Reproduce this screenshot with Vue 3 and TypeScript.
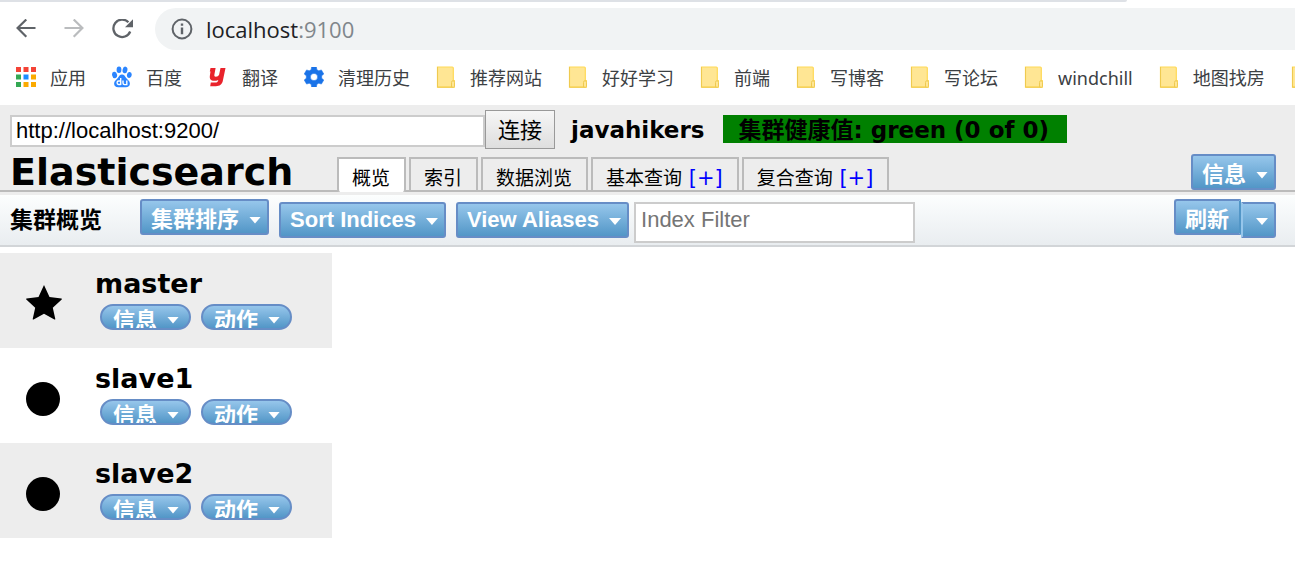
<script setup lang="ts">
import { ref } from 'vue'

interface Bookmark {
  label: string
  icon: 'apps' | 'paw' | 'dict' | 'gear' | 'folder'
}
interface Tab {
  label: string
  add?: boolean
}
interface ClusterNode {
  name: string
  master: boolean
}

const bookmarks: Bookmark[] = [
  { label: '应用', icon: 'apps' },
  { label: '百度', icon: 'paw' },
  { label: '翻译', icon: 'dict' },
  { label: '清理历史', icon: 'gear' },
  { label: '推荐网站', icon: 'folder' },
  { label: '好好学习', icon: 'folder' },
  { label: '前端', icon: 'folder' },
  { label: '写博客', icon: 'folder' },
  { label: '写论坛', icon: 'folder' },
  { label: 'windchill', icon: 'folder' },
  { label: '地图找房', icon: 'folder' },
  { label: '', icon: 'folder' },
]
const tabs: Tab[] = [
  { label: '概览' },
  { label: '索引' },
  { label: '数据浏览' },
  { label: '基本查询', add: true },
  { label: '复合查询', add: true },
]
const nodes: ClusterNode[] = [
  { name: 'master', master: true },
  { name: 'slave1', master: false },
  { name: 'slave2', master: false },
]
const appColors = ['#f44336', '#f44336', '#f44336', '#34a853', '#1a8cff', '#fbaa00', '#34a853', '#fbaa00', '#fbaa00']
const endpoint = ref('http://localhost:9200/')
const filter = ref('')
const active = ref(0)
</script>

<template>
  <div class="window">
    <div class="tabstrip"></div>
    <nav class="navbar">
      <button class="nav-btn" aria-label="Back">
        <svg width="20" height="20" viewBox="0 0 20 20" fill="none" stroke="#5f6368" stroke-width="2.2"><path d="M19.5 9H2M10.3 .5 1.600 9l8.700 8.700" /></svg>
      </button>
      <button class="nav-btn" aria-label="Forward">
        <svg width="20" height="20" viewBox="0 0 20 20" fill="none" stroke="#babcbe" stroke-width="2.2"><path d="M.5 9H18M9.7 .5 18.400 9l-8.700 8.700" /></svg>
      </button>
      <button class="nav-btn" aria-label="Reload">
        <svg width="22" height="20" viewBox="0 0 22 20"><path d="M18.200 12.500A8.700 8.700 0 1 1 16.400 3.300" fill="none" stroke="#5f6368" stroke-width="2.300" /><path d="M21 .2v8h-8z" fill="#5f6368" /></svg>
      </button>
      <div class="omnibox">
        <svg width="22" height="22" viewBox="0 0 22 22"><circle cx="11" cy="11" r="9.400" fill="none" stroke="#5f6368" stroke-width="2" /><path d="M9.800 5.500h2.400v2.200H9.800zM9.800 9.600h2.400v6.600H9.800z" fill="#5f6368" /></svg>
        <span class="url">localhost<span class="port">:9100</span></span>
      </div>
    </nav>
    <nav class="bookmarks">
      <a v-for="(b, i) in bookmarks" :key="i" href="#" class="bookmark">
        <svg v-if="b.icon === 'apps'" width="20" height="20" viewBox="0 0 20 20">
          <rect v-for="(c, n) in appColors" :key="n" :x="(n % 3) * 7.5" :y="Math.floor(n / 3) * 7.5" width="5" height="5" :fill="c" />
        </svg>
        <svg v-else-if="b.icon === 'paw'" width="20" height="22" viewBox="0 0 20 22" fill="#2b85ff">
          <ellipse cx="2.6" cy="9" rx="2.5" ry="3.2" transform="rotate(-12 2.6 9)" />
          <ellipse cx="7" cy="3.7" rx="2.4" ry="3.3" />
          <ellipse cx="13" cy="3.9" rx="2.4" ry="3.3" transform="rotate(12 13 3.9)" />
          <ellipse cx="17.3" cy="9" rx="2.4" ry="3" transform="rotate(8 17.3 9)" />
          <path d="M10 8.6c2.2 0 3 1.8 4.2 3.3 1.3 1.6 3.7 3 3.7 5.6 0 2.5-1.7 3.8-4 3.8H6.100c-2.300 0-4-1.300-4-3.800 0-2.600 2.400-4 3.700-5.600C7 10.400 7.800 8.600 10 8.600z" />
          <path d="M8.700 12v7M8.700 15H6.600c-2 0-2 3.500 0 3.500h2.100M11 14.500v2.600c0 1 .6 1.500 1.500 1.500h2.300v-4.100" fill="none" stroke="#fff" stroke-width="1.400" />
        </svg>
        <svg v-else-if="b.icon === 'dict'" width="20" height="20" viewBox="0 0 20 20">
          <path d="M2.500 1H7.600L6.400 7.500c-.3 1.500.2 2.200 1.400 2.200 1.500 0 2.700-.8 3.300-2L12.500 1h5l-2.600 12.600c-.8 4-3.200 5.600-7 5.600H2.200l.6-3.800h4.500c1.700 0 2.600-.6 3-2.500-1.300.6-2.700.8-4.200.8-3.300 0-4.800-1.900-4.200-5.300L2.500 4.600H1.800z" fill="#e9232c" />
        </svg>
        <svg v-else-if="b.icon === 'gear'" width="20" height="20" viewBox="0 0 20 20">
          <path d="M7.600 0h4.800l.5 2.700 1.900 1.100 2.600-.9 2.400 4.100-2.100 1.800v2.400l2.100 1.800-2.400 4.100-2.600-.9-1.900 1.100-.5 2.700H7.600l-.5-2.700-1.900-1.100-2.600.9L.2 13l2.100-1.800V8.800L.2 7l2.400-4.100 2.600.9 1.900-1.100zM10 6.400a3.600 3.600 0 1 0 0 7.200 3.600 3.600 0 0 0 0-7.200z" fill="#1a73e8" fill-rule="evenodd" stroke="#1a73e8" stroke-width=".5" stroke-linejoin="round" />
        </svg>
        <svg v-else width="20" height="22" viewBox="0 0 20 22">
          <path d="M1.500 1h14.800q1 0 1 1v12.500h1v6.700H1.500z" fill="#ffe694" stroke="#ffd957" stroke-width="1.200" />
          <path d="M1.500 1v20.200h16" fill="none" stroke="#efca50" />
          <path d="M15.500 21v-4.500q0-1.800 1.500-1.800t1.500 1.800v4q0 .7-.7.700z" fill="#ffe694" stroke="#efca50" />
        </svg>
        <span>{{ b.label }}</span>
      </a>
    </nav>

    <header class="header">
      <form class="connect" @submit.prevent>
        <input v-model="endpoint" class="endpoint" type="text" aria-label="Elasticsearch URL" />
        <button class="connect-btn">连接</button>
        <strong class="cluster">javahikers</strong>
        <strong class="health">集群健康值: green (0 of 0)</strong>
      </form>
      <div class="title-row">
        <h1>Elasticsearch</h1>
        <div class="tabs">
          <button v-for="(t, i) in tabs" :key="t.label" class="tab" :class="{ active: active === i }" @click="active = i">
            {{ t.label }}<span v-if="t.add" class="add"> [+]</span>
          </button>
        </div>
        <button class="btn info">信息<i class="caret"></i></button>
      </div>
    </header>

    <section class="toolbar">
      <h2>集群概览</h2>
      <button class="btn">集群排序<i class="caret"></i></button>
      <button class="btn low">Sort Indices<i class="caret"></i></button>
      <button class="btn low">View Aliases<i class="caret"></i></button>
      <input v-model="filter" class="filter" type="text" placeholder="Index Filter" aria-label="Index Filter" />
      <div class="refresh">
        <button class="btn left">刷新</button>
        <button class="btn low right" aria-label="刷新选项"><i class="caret"></i></button>
      </div>
    </section>

    <main>
      <table class="nodes">
        <tbody>
          <tr v-for="n in nodes" :key="n.name">
            <td class="mark">
              <svg v-if="n.master" width="38" height="36" viewBox="0 0 38 36"><path d="m19 0 5.500 12 12 1.400q.8.300.2 1l-8.900 8.300 2.500 11.300q0 .9-.9.500L19 28.700 8.600 34.500q-.9.400-.9-.5l2.500-11.300-8.900-8.300q-.6-.7.200-1l12-1.400z" /></svg>
              <svg v-else width="38" height="36" viewBox="0 0 38 36"><circle cx="18" cy="19" r="17" /></svg>
            </td>
            <td class="node">
              <div class="name">{{ n.name }}</div>
              <div class="pills">
                <button class="btn pill">信息<i class="caret"></i></button>
                <button class="btn pill">动作<i class="caret"></i></button>
              </div>
            </td>
          </tr>
        </tbody>
      </table>
    </main>
  </div>
</template>

<style>
body {
  margin: 0;
  background: #fff;
  overflow: hidden;
}
</style>

<style scoped>
* {
  box-sizing: border-box;
}
.window {
  font-family: 'DejaVu Sans', 'Noto Sans CJK SC', sans-serif;
  color: #000;
}
button,
input {
  margin: 0;
  border-radius: 0;
  outline: 0;
}
svg {
  display: block;
  flex: none;
}
.tabstrip {
  width: 87%;
  height: 2px;
  background: #dee1e6;
  border-bottom-right-radius: 4px;
}
.navbar {
  display: flex;
  align-items: center;
  height: 54px;
  padding-left: 16px;
}
.nav-btn {
  width: 48px;
  padding: 0;
  border: 0;
  background: none;
}
.omnibox {
  display: flex;
  flex: 1;
  align-items: center;
  gap: 13px;
  height: 42px;
  margin-left: -5px;
  padding-left: 16px;
  border-radius: 21px 0 0 21px;
  background: #f1f3f4;
}
.url {
  font: 22px/40px 'Open Sans', sans-serif;
  color: #202124;
}
.port {
  color: #80868b;
}
.bookmarks {
  display: flex;
  align-items: center;
  gap: 26px;
  height: 49px;
  padding: 0 0 7px 16px;
  overflow: hidden;
}
.bookmark {
  display: flex;
  flex: none;
  align-items: center;
  gap: 14px;
  height: 42px;
  font: 18px/26px 'Noto Sans', 'Noto Sans CJK SC', sans-serif;
  color: #3c4043;
  text-decoration: none;
}
.bookmark span {
  padding-top: 2px;
}
.header {
  padding: 5px 19px 0 10px;
  border-bottom: 2px solid #bbb;
  background: #ededed;
}
.connect {
  display: flex;
  align-items: flex-start;
  height: 42px;
}
.endpoint {
  width: 475px;
  height: 32px;
  margin-top: 5px;
  padding: 0 4px;
  border: 2px solid #ccc;
  background: #fff;
  font: 22px 'Liberation Sans', sans-serif;
  color: #000;
}
.connect-btn {
  height: 39px;
  padding: 0 12px 3px;
  border: 1px solid #999;
  background: linear-gradient(#f6f6f6, #dedede);
  font: 22px 'Noto Sans CJK SC', sans-serif;
  color: #000;
}
.cluster,
.health {
  height: 28px;
  margin-top: 5px;
  font-size: 23px;
  line-height: 30px;
  white-space: nowrap;
}
.cluster {
  margin-left: 16px;
}
.health {
  margin-left: 18px;
  padding: 0 18px 0 16px;
  background: green;
}
.title-row {
  display: flex;
  align-items: flex-end;
  height: 38px;
}
h1 {
  width: 327px;
  margin: 0;
  font-size: 38px;
  line-height: 36px;
}
.tabs {
  display: flex;
  gap: 3px;
}
.tab {
  height: 33px;
  padding: 6px 14px 0 13px;
  border: 2px solid #bbb;
  border-bottom: 0;
  background: #ededed;
  font: 19px/26px 'DejaVu Sans', 'Noto Sans CJK SC', sans-serif;
  color: #000;
  white-space: pre;
}
.tab.active {
  height: 35px;
  margin-bottom: -2px;
  padding-bottom: 2px;
  border-radius: 0 0 3px 3px;
  background: #fff;
}
.add {
  font-size: 21px;
  line-height: 24px;
  color: #00f;
}
.btn {
  display: flex;
  align-items: center;
  gap: 10px;
  height: 36px;
  padding: 6px 6px 0 9px;
  border: 2px solid #668dc6;
  border-radius: 3px;
  background: linear-gradient(#96c6eb, #5296c7);
  font: bold 22px/32px 'Liberation Sans', 'Noto Sans CJK SC', sans-serif;
  color: #fff;
  white-space: nowrap;
}
.caret {
  width: 12px;
  height: 7px;
  background: #fff;
  clip-path: polygon(0 0, 100% 0, 50% 100%);
}
.info {
  margin-left: auto;
}
.toolbar {
  display: flex;
  align-items: flex-start;
  gap: 10px;
  height: 55px;
  padding: 4px 19px 0 10px;
  border-top: 3px solid #ededed;
  border-bottom: 2px solid #d2d5d8;
  background: linear-gradient(#fcfefe, #e9edf0);
}
h2 {
  width: 120px;
  margin: 0;
  font: bold 23px/38px 'Noto Sans CJK SC', sans-serif;
}
.low {
  margin-top: 3px;
  padding-top: 0;
}
.low .caret {
  margin-top: 3px;
}
.filter {
  width: 281px;
  height: 41px;
  margin: 3px 0 0 -5px;
  padding: 0 5px 6px;
  border: 2px solid #ccc;
  background: #fff;
  font: 22px 'Liberation Sans', sans-serif;
}
.filter::placeholder {
  color: #757575;
}
.refresh {
  display: flex;
  margin-left: auto;
}
.left {
  padding-right: 10px;
  border-right-color: #5296c7;
  border-radius: 3px 0 0 3px;
}
.right {
  padding-left: 13px;
  border-left-color: #96c6eb;
  border-radius: 0 3px 3px 0;
}
main {
  padding-top: 6px;
}
.nodes {
  width: 332px;
  border-collapse: collapse;
}
.nodes tr {
  height: 95px;
}
.nodes tr:nth-child(odd) {
  background: #ededed;
}
td {
  padding: 0;
  vertical-align: top;
}
.mark {
  width: 95px;
  padding: 32px 0 0 25px;
}
.node {
  padding-top: 15px;
}
.name {
  font-size: 27px;
  font-weight: bold;
  line-height: 32px;
}
.pills {
  display: flex;
  gap: 10px;
  padding: 4px 0 0 5px;
}
.pill {
  height: 26px;
  padding: 8px 10px 0 11px;
  border-radius: 13px;
  overflow: hidden;
}
.pill .caret {
  margin-top: -2px;
}
</style>
